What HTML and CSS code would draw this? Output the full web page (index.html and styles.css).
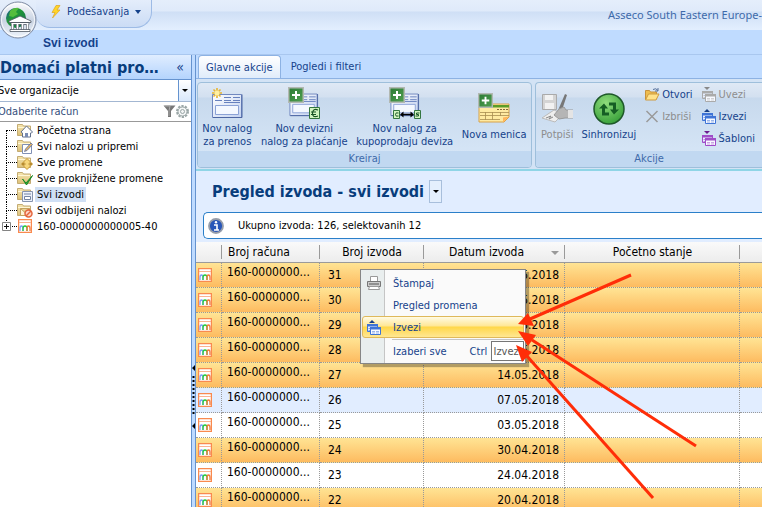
FILE: index.html
```html
<!DOCTYPE html>
<html lang="sr-Latn">
<head>
    <meta charset="UTF-8">
    <meta name="viewport" content="width=device-width, initial-scale=1.0">
    <title>Pregled izvoda - svi izvodi</title>
    <link rel="stylesheet" href="styles.css">
</head>
<body>

    <!-- Shared icons -->
    <svg class="icon-defs" width="0" height="0" aria-hidden="true">
        <defs>
            <linearGradient id="folder-fill" x1="0" y1="0" x2="0" y2="1"><stop offset="0" stop-color="#f6e6b0"/><stop offset="1" stop-color="#dcc078"/></linearGradient>
            <linearGradient id="form-fill" x1="0" y1="0" x2="1" y2="1"><stop offset="0" stop-color="#fff"/><stop offset="1" stop-color="#c3d2f0"/></linearGradient>
            <linearGradient id="plus-fill" x1="0" y1="0" x2="1" y2="1"><stop offset="0" stop-color="#2c7a34"/><stop offset="1" stop-color="#4fa050"/></linearGradient>
            <linearGradient id="orb-fill" x1="0" y1="0" x2="0" y2="1"><stop offset="0" stop-color="#fdfdfe"/><stop offset="0.5" stop-color="#c9d3e2"/><stop offset="1" stop-color="#eef4fb"/></linearGradient>
            <radialGradient id="sync-fill" cx="0.4" cy="0.3" r="0.8"><stop offset="0" stop-color="#8fdc7c"/><stop offset="1" stop-color="#2f9a33"/></radialGradient>
            <linearGradient id="globe-fill" x1="0" y1="0" x2="1" y2="1"><stop offset="0" stop-color="#1d4f9c"/><stop offset="0.4" stop-color="#1f9a34"/><stop offset="1" stop-color="#1a6a58"/></linearGradient>
        </defs>
        <symbol id="folder" viewBox="0 0 16 16">
            <path d="M.5 2.500h5l1 1.500h7v9.500H.5z" fill="url(#folder-fill)" stroke="#c3ab72"/>
            <path d="M1 5.500h12" stroke="#fff6d4"/>
        </symbol>
        <symbol id="account" viewBox="0 0 14 14">
            <path d="M.5.5h13v13H.5z" fill="#fff" stroke="#f98a4f" stroke-width="1.500"/>
            <path d="M1 3.500h12" stroke="#f9b592"/>
            <path d="M2 12V9.500q0-2.500 1.500-2.500T5 9.500V12" fill="none" stroke="#7f9df5" stroke-width="1.300"/>
            <path d="M5 12V9.500Q5 7 7 7t2 2.500V12" fill="none" stroke="#25ce3c" stroke-width="1.300"/>
            <path d="M9 12V9.500Q9 7 10.500 7T12 9.500V12" fill="none" stroke="#f3793c" stroke-width="1.300"/>
        </symbol>
        <symbol id="form" viewBox="0 0 32 32">
            <path d="M1.500 7.500h29v23h-29z" fill="url(#form-fill)" stroke="#7188bf"/>
            <path d="M2 30.500h29v-23" fill="none" stroke="#4d66a3"/>
            <path d="M13 10.500h7m2 0h7M13 13.500h7m2 0h7M4 13.500h7m2 2h16" stroke="#6781be"/>
            <path d="M4.500 18.500h23v9h-23z" fill="#f4f8ff" stroke="#8ba2d6"/>
        </symbol>
        <symbol id="plus-badge" viewBox="0 0 16 16">
            <path d="M.5.5h15v15H.5z" fill="url(#plus-fill)" stroke="#b2b8b2" stroke-width="2"/>
            <path d="M8 4v8M4 8h8" stroke="#fff" stroke-width="2"/>
        </symbol>
        <symbol id="tables" viewBox="0 0 16 16">
            <path d="M1.500 5.500h10v7h-10z" fill="#e6eeff" stroke="currentColor"/>
            <path d="M1 5h11v2.500H1z" fill="currentColor"/>
            <path d="M2.500 9.500h2m-2 2h2" stroke="currentColor" opacity=".6"/>
            <path d="M4.500 8.500h10v7h-10z" fill="#f7f9ff" stroke="currentColor"/>
            <path d="M4 8h11v2.500H4z" fill="currentColor"/>
            <path d="M6 12.500h3m1 0h3M6 14h3m1 0h3" stroke="currentColor" opacity=".5"/>
        </symbol>
    </svg>

    <!-- Title bar -->
    <header class="title-bar">
        <button class="quick-menu" type="button">
            <svg width="10" height="14" viewBox="0 0 10 14"><path d="M5 .5h4L6 5h3L1.500 13 4 7.500H1z" fill="#ffd528" stroke="#e1a51e" stroke-width=".7"/></svg>
            Podešavanja
            <svg width="6" height="4" viewBox="0 0 6 4"><path d="M0 0h6L3 4z" fill="#15428b"/></svg>
        </button>
        <span class="company">Asseco South Eastern Europe-</span>
        <button class="orb" type="button" aria-label="Glavni meni">
            <svg width="40" height="40" viewBox="0 0 40 40">
                <circle cx="20" cy="20" r="18" fill="url(#orb-fill)" stroke="#7e8ba3"/>
                <circle cx="20" cy="20" r="16.500" fill="none" stroke="#fff" opacity=".8"/>
                <circle cx="18" cy="18" r="10" fill="url(#globe-fill)"/>
                <path d="M12 11q4-4 9-3l-3 4 2 2-5 3-4-1z" fill="#54bd3c"/>
                <path d="M11 21l11-5 11 5v1.500H11zM13 22.500h18v2H13z" fill="#fff" stroke="#4d5561" stroke-width=".8"/>
                <path d="M14.500 24v6M19.500 24v6M24.500 24v6M29.500 24v6" stroke="#4d5561" stroke-width="3"/>
                <path d="M14.500 24v6M19.500 24v6M24.500 24v6M29.500 24v6" stroke="#fff" stroke-width="1.800"/>
                <path d="M12 29.500h20v2H12z" fill="#fff" stroke="#4d5561" stroke-width=".8"/>
            </svg>
        </button>
    </header>
    <div class="document-bar">Svi izvodi</div>

    <div class="workspace">

        <!-- Navigation -->
        <aside class="sidebar">
            <div class="sidebar-title">
                <h2>Domaći platni promet</h2>
                <button type="button" aria-label="Sakrij">«</button>
            </div>
            <div class="organisation">
                <select aria-label="Organizacija">
                    <option>Sve organizacije</option>
                </select>
                <svg width="6" height="3" viewBox="0 0 6 3"><path d="M0 0h6L3 3z" fill="#000"/></svg>
            </div>
            <div class="account-filter">
                <input type="text" placeholder="Odaberite račun" aria-label="Račun">
                <svg width="13" height="13" viewBox="0 0 13 13"><path d="M.5.500h12L8 6v6H5V6z" fill="#777"/><path d="M2 1h5L6 6v5" fill="none" stroke="#aaa"/></svg>
                <svg width="13" height="13" viewBox="0 0 13 13" fill="none" stroke="#9aa6a6"><circle cx="6.500" cy="6.500" r="5.500" stroke-dasharray="2.300 1.150" stroke-width="2"/><circle cx="6.500" cy="6.500" r="4.500" fill="#f3f5f5"/><circle cx="6.500" cy="6.500" r="2"/></svg>
            </div>
            <ul class="tree">
                <li>
                    <svg width="16" height="16" viewBox="0 0 16 16"><use href="#folder"/><path d="M4 10l5.500-6 6 6-1 1h-1v4h-8v-4z" fill="#fff" stroke="#63718c"/><path d="M8 11h3v4H8z" fill="#7a8cb3"/></svg>
                    <span>Početna strana</span>
                </li>
                <li>
                    <svg width="16" height="16" viewBox="0 0 16 16"><use href="#folder"/><path d="M5.500 6.500h9v9h-9z" fill="#fff" stroke="#8090b5"/><path d="M7.500 13.500l1-2.500L14 5l1.500 1.500L10 12.500z" fill="#e3b163" stroke="#5970a4" stroke-width=".8"/></svg>
                    <span>Svi nalozi u pripremi</span>
                </li>
                <li>
                    <svg width="16" height="16" viewBox="0 0 16 16"><use href="#folder"/><path d="M10 4.500l5.500 5.500-5.500 5.500L4.500 10z" fill="#f7d77c" stroke="#c69838"/><path d="M5.500 10h3m3 0h3M7 8.500L5.500 10 7 11.500m6-3l1.500 1.500-1.500 1.500" fill="none" stroke="#a27218"/></svg>
                    <span>Sve promene</span>
                </li>
                <li>
                    <svg width="16" height="16" viewBox="0 0 16 16"><use href="#folder"/><path d="M5.500 9l3.500 4 6.500-7.500L9.500 15z" fill="#34ae3c" stroke="#1b8a27"/></svg>
                    <span>Sve proknjižene promene</span>
                </li>
                <li class="current">
                    <svg width="16" height="16" viewBox="0 0 16 16"><use href="#folder"/><path d="M5.500 5.500h10v10h-10z" fill="#edf2fb" stroke="#8694ae"/><path d="M7.500 10.500h6v3h-6zM7 8h7" fill="#fff" stroke="#7484a3"/></svg>
                    <span>Svi izvodi</span>
                </li>
                <li>
                    <svg width="16" height="16" viewBox="0 0 16 16"><use href="#folder"/><path d="M3.500 6.500h9v7h-9l0-7 4.500 4 4.500-4" fill="#fdf3d6" stroke="#c4a25e"/><circle cx="11.500" cy="11.500" r="3.500" fill="#ffd4c6" stroke="#e4653d" stroke-width="1.500"/><path d="M9 14l5-5" stroke="#e4653d" stroke-width="1.500"/></svg>
                    <span>Svi odbijeni nalozi</span>
                </li>
                <li class="expandable">
                    <svg width="9" height="9" viewBox="0 0 9 9"><path d="M.5.500h8v8h-8z" fill="#fff" stroke="#848484"/><path d="M2 4.500h5M4.500 2v5" stroke="#111"/></svg>
                    <svg width="14" height="14"><use href="#account"/></svg>
                    <span>160-0000000000005-40</span>
                </li>
            </ul>
        </aside>

        <div class="splitter">
            <svg width="3" height="66" viewBox="0 0 3 66"><path d="M3 1v6L0 4zM3 59v6l-3-3z" fill="#000"/><path d="M1.500 12v40" stroke="#000" stroke-width="2" stroke-dasharray="2 2"/></svg>
        </div>

        <main class="content">

            <!-- Ribbon -->
            <nav class="ribbon-tabs">
                <button class="active" type="button">Glavne akcije</button>
                <button type="button">Pogledi i filteri</button>
            </nav>
            <div class="ribbon">
                <section class="ribbon-group">
                    <div class="group-body">
                        <button class="large" type="button">
                            <svg width="32" height="32" viewBox="0 0 32 32"><use href="#form"/><path d="M6 1v10M1 6h10M2.500 2.500l7 7M9.500 2.500l-7 7" stroke="#e8b52f" stroke-width="1.600"/><circle cx="6" cy="6" r="2.500" fill="#fff0a0"/></svg>
                            Nov nalog<br>za prenos
                        </button>
                        <button class="large" type="button">
                            <svg width="32" height="32" viewBox="0 0 32 32"><use href="#form" width="31" height="30"/><use href="#plus-badge" width="16" height="16"/><path d="M21.500 20.500h10v11h-10z" fill="#d3f5c0" stroke="#347640"/><path d="M30 23q-5-2-5.500 3t5.500 3M23 25h5m-5 2.500h5" fill="none" stroke="#185425" stroke-width="1.200"/></svg>
                            Nov devizni<br>nalog za plaćanje
                        </button>
                        <button class="large" type="button">
                            <svg width="32" height="32" viewBox="0 0 32 32"><use href="#form" width="31" height="30"/><use href="#plus-badge" width="16" height="16"/><path d="M4.500 23.500h6v8h-6zM25.500 23.500h6v8h-6z" fill="#d3f5c0" stroke="#347640"/><path d="M9.500 26q-3-1-3 1.500t3 1.500M30.500 26h-3v1.500h2V29h-3" fill="none" stroke="#185425"/><path d="M11 27.500l3.500-3v6zM25 27.500l-3.500-3v6z" fill="#000"/><path d="M14 27.500h8" stroke="#000" stroke-width="1.500"/></svg>
                            Nov nalog za<br>kupoprodaju deviza
                        </button>
                        <button class="large" type="button">
                            <svg width="32" height="32" viewBox="0 0 32 32"><path d="M1 11h30v13l-5 5H1z" fill="#ffeaa2" stroke="#d7a249"/><path d="M15 12h16v2.500H15z" fill="#5b9c28"/><path d="M2 19.500h29M2 22.500h29M2 26.500h20M7.500 19v8m7-8v8m8-8v4" stroke="#a88d51" stroke-width=".8"/><path d="M19 16.500h11" stroke="#80693a" stroke-dasharray="2 1"/><path d="M31 23.500l-6 6v-5z" fill="#ffb55c"/><use href="#plus-badge" width="15" height="15"/></svg>
                            Nova menica
                        </button>
                    </div>
                    <h3>Kreiraj</h3>
                </section>
                <section class="ribbon-group actions">
                    <div class="group-body">
                        <button class="large" type="button" disabled>
                            <svg width="32" height="32" viewBox="0 0 32 32"><path d="M1.500 1.500h14v15h-14z" fill="#d4d4d4" stroke="#aaa"/><path d="M4 2h8v5H4zM4 10h9v6H4z" fill="#f2f2f2"/><path d="M1 25l12-8 9 4-8 8z" fill="#eee" stroke="#bbb"/><path d="M15 22L24 1l2 1-6 18z" fill="#777"/><path d="M13 22l5-6 5-2 2 3h7v8h-8l-6 1z" fill="#b5b5b5" stroke="#999"/><path d="M27 17h5v8h-5z" fill="#e4e4e4"/><path d="M5 25l5-2-2 3 4-2" fill="none" stroke="#888"/></svg>
                            Potpiši
                        </button>
                        <button class="large" type="button">
                            <svg width="32" height="32" viewBox="0 0 32 32"><circle cx="16" cy="16" r="15" fill="url(#sync-fill)" stroke="#1e5829" stroke-width="1.500"/><path d="M6 15.500l5-5 4 5h-3v4h4v3h-7v-7zM26 16.500l-5 5-4-5h3v-4h-4v-3h7v7z" fill="#155e24"/></svg>
                            Sinhronizuj
                        </button>
                        <div class="small-column">
                            <button type="button">
                                <svg width="16" height="16" viewBox="0 0 16 16"><path d="M1.500 13.500v-9h4l1 1.500h6v7z" fill="#eebd4f" stroke="#c7923c"/><path d="M1.500 14l3-6H15l-3 6z" fill="#ffe28a" stroke="#cf9b40"/><path d="M9 3.500q3-2 5 1m0-2.500v3h-3" fill="none" stroke="#56719c"/></svg>
                                Otvori
                            </button>
                            <button type="button" disabled>
                                <svg width="16" height="16" viewBox="0 0 16 16"><path d="M2.500 3l11 11m0-11l-11 11" stroke="#9a9a9a" stroke-width="1.500"/></svg>
                                Izbriši
                            </button>
                        </div>
                        <div class="small-column">
                            <button type="button" disabled>
                                <svg class="import-icon" width="16" height="16" viewBox="0 0 16 16"><use href="#tables"/><path d="M3 1h6L6 4z" fill="#888"/></svg>
                                Uvezi
                            </button>
                            <button type="button">
                                <svg class="export-icon" width="16" height="16" viewBox="0 0 16 16"><use href="#tables"/><path d="M3 4h6L6 1z" fill="#173f87"/></svg>
                                Izvezi
                            </button>
                            <button type="button">
                                <svg class="template-icon" width="16" height="16" viewBox="0 0 16 16"><use href="#tables"/><path d="M3 1h6L6 4z" fill="#6c1b8e"/></svg>
                                Šabloni
                            </button>
                        </div>
                    </div>
                    <h3>Akcije</h3>
                </section>
            </div>

            <!-- Statement list -->
            <div class="page-title">
                <h1>Pregled izvoda - svi izvodi</h1>
                <button type="button" aria-label="Izaberi pregled"><svg width="6" height="3" viewBox="0 0 6 3"><path d="M0 0h6L3 3z" fill="#000"/></svg></button>
            </div>
            <div class="info-bar">
                <svg width="16" height="16" viewBox="0 0 16 16"><circle cx="8" cy="8" r="7" fill="#2856b8" stroke="#969daa" stroke-width="1.800"/><path d="M6 7h3v5m-3 0h5" fill="none" stroke="#fff" stroke-width="1.600"/><circle cx="8" cy="4.300" r="1.200" fill="#fff"/></svg>
                Ukupno izvoda: 126, selektovanih 12
            </div>
            <table class="statements">
                <colgroup>
                    <col class="col-icon"><col class="col-account"><col class="col-number"><col class="col-date"><col class="col-balance"><col>
                </colgroup>
                <thead>
                    <tr>
                        <th></th>
                        <th class="left">Broj računa</th>
                        <th>Broj izvoda</th>
                        <th class="sorted">Datum izvoda<svg width="8" height="4" viewBox="0 0 8 4"><path d="M0 0h8L4 4z" fill="#999"/></svg></th>
                        <th>Početno stanje</th>
                        <th></th>
                    </tr>
                </thead>
                <tbody>
                    <tr class="selected"><td><svg width="14" height="14"><use href="#account"/></svg></td><td class="account">160-0000000...</td><td>31</td><td class="date">18.05.2018</td><td></td><td></td></tr>
                    <tr class="selected"><td><svg width="14" height="14"><use href="#account"/></svg></td><td class="account">160-0000000...</td><td>30</td><td class="date">17.05.2018</td><td></td><td></td></tr>
                    <tr class="selected"><td><svg width="14" height="14"><use href="#account"/></svg></td><td class="account">160-0000000...</td><td>29</td><td class="date">16.05.2018</td><td></td><td></td></tr>
                    <tr class="selected"><td><svg width="14" height="14"><use href="#account"/></svg></td><td class="account">160-0000000...</td><td>28</td><td class="date">15.05.2018</td><td></td><td></td></tr>
                    <tr class="selected"><td><svg width="14" height="14"><use href="#account"/></svg></td><td class="account">160-0000000...</td><td>27</td><td class="date">14.05.2018</td><td></td><td></td></tr>
                    <tr class="alternate"><td><svg width="14" height="14"><use href="#account"/></svg></td><td class="account">160-0000000...</td><td>26</td><td class="date">07.05.2018</td><td></td><td></td></tr>
                    <tr><td><svg width="14" height="14"><use href="#account"/></svg></td><td class="account">160-0000000...</td><td>25</td><td class="date">03.05.2018</td><td></td><td></td></tr>
                    <tr class="selected"><td><svg width="14" height="14"><use href="#account"/></svg></td><td class="account">160-0000000...</td><td>24</td><td class="date">30.04.2018</td><td></td><td></td></tr>
                    <tr><td><svg width="14" height="14"><use href="#account"/></svg></td><td class="account">160-0000000...</td><td>23</td><td class="date">24.04.2018</td><td></td><td></td></tr>
                    <tr class="selected"><td><svg width="14" height="14"><use href="#account"/></svg></td><td class="account">160-0000000...</td><td>22</td><td class="date">20.04.2018</td><td></td><td></td></tr>
                </tbody>
            </table>
        </main>
    </div>

    <!-- Context menu -->
    <div class="context-menu">
        <button type="button">
            <svg width="16" height="16" viewBox="0 0 16 16"><path d="M4.500 1.500h7v5h-7z" fill="#fff" stroke="#999"/><path d="M1.500 6.500h13v5h-13z" fill="#ccc" stroke="#777"/><path d="M3 9h10" stroke="#555"/><path d="M3.500 11.500h9l1 3h-11z" fill="#fff" stroke="#999"/></svg>
            Štampaj
        </button>
        <button type="button"><i></i>Pregled promena</button>
        <button class="hovered" type="button">
            <svg class="export-icon" width="16" height="16" viewBox="0 0 16 16"><use href="#tables"/><path d="M3 4h6L6 1z" fill="#173f87"/></svg>
            Izvezi
        </button>
        <hr>
        <button type="button"><i></i>Izaberi sve<kbd>Ctrl</kbd></button>
    </div>
    <div class="tooltip">Izvezi</div>

    <!-- Arrows pointing at the export command -->
    <svg class="arrows" width="200" height="240" viewBox="510 265 200 240">
        <g stroke="#ff2d08" stroke-width="3">
            <path d="M631 275L530 319"/>
            <path d="M696 446L532 340"/>
            <path d="M653 498L526 355"/>
        </g>
        <g fill="#ff2d08">
            <path d="M518 324l10-11 6 13z"/>
            <path d="M518 331l18 4-8 11z"/>
            <path d="M516 345l16 7-10 10z"/>
        </g>
    </svg>

</body>
</html>
```
FILE: styles.css
```css
/* General Styling */
* {
    box-sizing: border-box;
}

body {
    display: flex;
    flex-direction: column;
    height: 100vh;
    margin: 0;
    overflow: hidden;
    background: #bfdbff;
    font: 11px "DejaVu Sans Condensed", "Noto Sans", sans-serif;
    color: #000;
}

button, input, select {
    margin: 0;
    padding: 0;
    border: 0;
    background: none;
    font: inherit;
    color: inherit;
}

h1, h2, h3 {
    margin: 0;
}

svg {
    flex: none;
}

.icon-defs {
    position: absolute;
}

/* Title bar */
.title-bar {
    display: flex;
    justify-content: space-between;
    flex: none;
    height: 30px;
    position: relative;
    background: linear-gradient(#e5eefb 0, #dfeafa 11px, #cfdff5 12px, #e2eefe 29px);
}

.quick-menu {
    display: flex;
    align-items: center;
    gap: 6px;
    height: 28px;
    margin-left: 36px;
    padding: 0 10px 4px 15px;
    border: 1px solid #9dbbe6;
    border-top: 0;
    border-left: 0;
    border-radius: 0 0 16px 14px;
    background: linear-gradient(#e4edfb, #cbdcf5);
    color: #15428b;
}

.company {
    line-height: 30px;
    color: #3e6aaa;
    font-family: "Noto Sans", sans-serif;
    white-space: nowrap;
}

.orb {
    position: absolute;
    top: 0;
    left: -2px;
}

.document-bar {
    flex: none;
    height: 25px;
    padding-left: 43px;
    border-bottom: 1px solid #a9c7ef;
    font: bold 12px/26px "Liberation Sans", Arial, sans-serif;
    color: #15428b;
}

.workspace {
    display: flex;
    flex: 1;
    min-height: 0;
}

/* Navigation */
.sidebar {
    flex: none;
    width: 192px;
    border-right: 1px solid #6593cf;
    background: #fff;
}

.sidebar-title {
    display: flex;
    align-items: center;
    justify-content: space-between;
    height: 25px;
    padding-right: 7px;
    border-bottom: 1px solid #6593cf;
    background: linear-gradient(#e0edff, #b4d4fd);
    color: #15428b;
}

.sidebar-title h2 {
    width: 164px;
    overflow: hidden;
    text-overflow: ellipsis;
    white-space: nowrap;
    font-size: 16px;
    color: #083d7c;
}

.sidebar-title button {
    font-size: 14px;
}

.organisation, .account-filter {
    display: flex;
    align-items: center;
    height: 22px;
    border-bottom: 1px solid #a3b7d2;
}

.organisation select, .account-filter input {
    flex: 1;
    min-width: 0;
    height: 20px;
    appearance: none;
    text-indent: -2px;
    outline: 0;
}

.organisation svg {
    box-sizing: content-box;
    padding: 9px 3px;
    border-left: 1px solid #6593cf;
    background: linear-gradient(#fff, #d9e8fb);
}

.account-filter {
    height: 20px;
    padding-right: 2px;
    border-color: #999;
}

.account-filter input::placeholder {
    color: #334e7c;
    opacity: 1;
}

.tree {
    margin: 0;
    padding: 0 0 0 6px;
    list-style: none;
}

.tree li {
    display: flex;
    align-items: center;
    height: 16px;
    position: relative;
    padding-left: 11px;
}

/* Dotted connector lines */
.tree li::before {
    content: '';
    position: absolute;
    left: 0;
    top: 0;
    width: 10px;
    height: 8px;
    border-left: 1px dotted #000;
    border-bottom: 1px dotted #000;
}

.tree li:first-child::before {
    border-left: 0;
}

.tree li:not(:last-child)::after {
    content: '';
    position: absolute;
    left: 0;
    top: 8px;
    height: 8px;
    border-left: 1px dotted #000;
}

.tree span {
    margin-left: 2px;
    padding: 0 2px;
    line-height: 15px;
    white-space: nowrap;
}

.tree .current span {
    background: #d0e0f5;
}

.tree .expandable {
    gap: 7px;
    padding-left: 0;
    margin-left: -4px;
}

.tree .expandable::before {
    left: 4px;
    width: 12px;
}

.tree .expandable span {
    margin-left: -4px;
}

.tree .expandable svg {
    position: relative;
}

.splitter {
    flex: none;
    width: 3px;
    padding-top: 309px;
    background: #bfdbff;
}

.splitter svg {
    display: block;
}

/* Ribbon */
.content {
    display: flex;
    flex-direction: column;
    flex: 1;
    min-width: 0;
    border-left: 1px solid #6593cf;
    background: #e1edff;
}

.ribbon-tabs {
    display: flex;
    flex: none;
    height: 23px;
    padding-left: 2px;
    background: #bfdbff;
}

.ribbon-tabs button {
    padding: 0 10px;
    color: #15428b;
}

.ribbon-tabs .active {
    padding: 0 7px;
    border: 1px solid #8db2e3;
    border-bottom: 0;
    border-radius: 4px 4px 0 0;
    background: linear-gradient(#fff, #e0ecfa);
}

.ribbon {
    display: flex;
    gap: 3px;
    flex: none;
    height: 93px;
    padding: 3px 0 1px 1px;
    border-top: 1px solid #8db2e3;
    border-bottom: 2px solid #8fd5e6;
    background: #d3e3f5;
}

.ribbon-group {
    display: flex;
    flex-direction: column;
    width: 335px;
    flex: none;
    border: 1px solid #9ebfdb;
    border-radius: 4px;
    background: linear-gradient(#dfe9f5 0, #d3e0f0 14px, #c7d9ed 15px, #d9e8f8);
    overflow: hidden;
}

.ribbon-group.actions {
    flex: 1;
    border-right: 0;
    border-radius: 4px 0 0 4px;
}

.ribbon-group h3 {
    height: 16px;
    font-size: 11px;
    font-weight: normal;
    line-height: 16px;
    text-align: center;
    color: #3e6aaa;
    background: #c1d8f1;
}

.group-body {
    display: flex;
    flex: 1;
    justify-content: space-around;
    align-items: center;
    color: #15428b;
}

.actions .group-body {
    justify-content: flex-start;
    gap: 8px;
    padding-left: 5px;
}

.group-body button {
    white-space: nowrap;
}

.group-body button:disabled {
    color: #8d8d8d;
}

.large {
    line-height: 13px;
}

.large svg {
    display: block;
    margin: 0 auto 3px;
}

.small-column {
    align-self: flex-start;
}

.small-column button {
    display: flex;
    align-items: center;
    gap: 2px;
    height: 22px;
}

.import-icon {
    color: #aaa;
}

.export-icon {
    color: #3f74d6;
}

.template-icon {
    color: #a04cc8;
}

/* Statement list */
.page-title {
    display: flex;
    align-items: center;
    gap: 5px;
    flex: none;
    height: 41px;
    padding-left: 16px;
}

.page-title h1 {
    font-size: 16px;
    white-space: nowrap;
    color: #083d7c;
}

.page-title button {
    display: flex;
    align-items: center;
    justify-content: center;
    width: 13px;
    height: 23px;
    border: 1px solid #a8bfdc;
    background: #e4effd;
}

.info-bar {
    display: flex;
    align-items: center;
    gap: 14px;
    flex: none;
    height: 27px;
    margin: 0 0 3px 7px;
    padding-left: 4px;
    border: 1px solid #2a7fc9;
    border-right: 0;
    border-radius: 5px 0 0 5px;
    background: #fff;
}

.statements {
    width: 100%;
    table-layout: fixed;
    border-collapse: separate;
    border-spacing: 0;
    font-size: 12px;
}

.col-icon {
    width: 26px;
}

.col-account {
    width: 98px;
}

.col-number {
    width: 104px;
}

.col-date {
    width: 141px;
}

.col-balance {
    width: 175px;
}

.statements th {
    height: 21px;
    padding: 0;
    border-bottom: 1px solid #9a9a9a;
    background: linear-gradient(90deg, #9a9a9a, #9a9a9a) right 3px / 1px 14px no-repeat, linear-gradient(#fafafa, #ececec);
    font-weight: normal;
}

.statements th:last-child {
    background: linear-gradient(#fafafa, #ececec);
}

.statements .left {
    padding-left: 6px;
    text-align: left;
}

.statements .sorted {
    position: relative;
    padding-right: 16px;
}

.sorted svg {
    position: absolute;
    top: 9px;
    right: 6px;
}

.statements td {
    height: 25px;
    padding: 0 5px 0 8px;
    border-right: 1px dotted #999;
    border-bottom: 1px dotted #999;
    background: #fff;
}

.statements td:first-child {
    padding: 0 0 0 2px;
}

.statements td:last-child {
    border-right: 0;
}

.statements td svg {
    display: block;
}

.statements .account {
    padding: 0 5px 7px;
    white-space: nowrap;
}

.statements .date {
    text-align: right;
}

.statements .selected td {
    background: linear-gradient(#ffe494, #fdbb60);
}

.statements .alternate td {
    background: #e1edff;
}

/* Context Menu */
.context-menu {
    position: absolute;
    top: 269px;
    left: 360px;
    width: 166px;
    padding: 2px 1px 1px;
    border: 1px solid #868686;
    background: linear-gradient(90deg, #e9eeee 23px, #c5c5c5 23px, #c5c5c5 24px, #fafafa 24px);
    box-shadow: 3px 3px 1px rgba(0, 0, 0, 0.3);
    color: #15428b;
}

.context-menu button {
    display: flex;
    align-items: center;
    gap: 11px;
    width: 100%;
    height: 22px;
    padding: 0 3px;
    border: 1px solid transparent;
    border-radius: 3px;
}

.context-menu i {
    width: 16px;
}

.context-menu .hovered {
    border-color: #dfb95b;
    background: linear-gradient(#fffbe5 0, #ffe795 9px, #ffd748 10px, #ffe793);
}

.context-menu hr {
    height: 1px;
    margin: 1px 0 0 30px;
    border: 0;
    background: #c5c5c5;
}

.context-menu kbd {
    margin-left: 12px;
    font: inherit;
}

.tooltip {
    position: absolute;
    top: 341px;
    left: 491px;
    width: 33px;
    height: 20px;
    border: 1px solid #767676;
    background: #fff;
    line-height: 19px;
    text-align: center;
    color: #575757;
}

.arrows {
    position: absolute;
    top: 265px;
    left: 510px;
    pointer-events: none;
}
```
